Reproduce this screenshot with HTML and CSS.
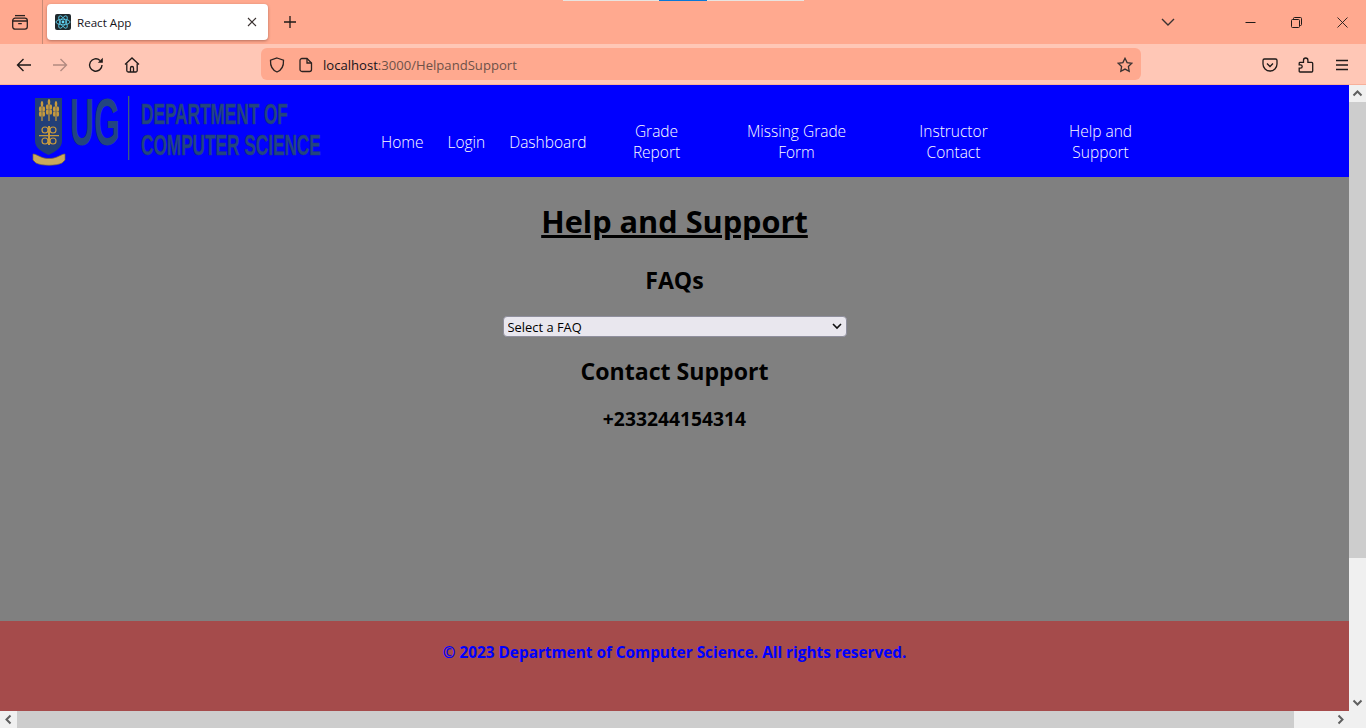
FILE: index.html
```html
<!DOCTYPE html>
<html lang="en">
<head>
<meta charset="utf-8">
<title>React App</title>
<link rel="stylesheet" href="styles.css">
</head>
<body>
<div class="share-strip"><span class="strip-light"></span><span class="strip-blue"></span><span class="strip-light strip-end"></span></div>
<header class="tabbar">
  <button class="tb-btn view-btn" aria-label="List all tabs">
    <svg width="18" height="18" viewBox="0 0 18 18" fill="none" stroke="#2b2220" stroke-width="1.3"><path d="M4 2.600h10"/><rect x="1.700" y="5.200" width="14.600" height="11" rx="2.400"/><path d="M1.700 8h14.600M7.200 10.600h3.600"/></svg>
  </button>
  <div class="tab">
    <svg class="favicon" width="16" height="16" viewBox="0 0 16 16" fill="none"><rect width="16" height="16" rx="2" fill="#20292d"/><g stroke="#61dafb" stroke-width=".8"><ellipse cx="8" cy="8" rx="7" ry="2.800"/><ellipse cx="8" cy="8" rx="7" ry="2.800" transform="rotate(60 8 8)"/><ellipse cx="8" cy="8" rx="7" ry="2.800" transform="rotate(120 8 8)"/></g><circle cx="8" cy="8" r="1.400" fill="#61dafb"/></svg>
    <span class="tab-title">React App</span>
    <svg class="tab-close" width="10" height="10" viewBox="0 0 10 10" stroke="#3a3231" stroke-width="1.100"><path d="M1 1l8 8M9 1l-8 8"/></svg>
  </div>
  <button class="tb-btn new-tab" aria-label="New tab">
    <svg width="14" height="14" viewBox="0 0 14 14" stroke="#1f1a19" stroke-width="1.300"><path d="M7 1v12M1 7h12"/></svg>
  </button>
  <div class="tabbar-spacer"></div>
  <svg class="tabs-chevron" width="14" height="8" viewBox="0 0 14 8" fill="none" stroke="#3a3231" stroke-width="1.400"><path d="M1 1l6 6 6-6"/></svg>
  <div class="win-controls">
    <svg width="11" height="11" viewBox="0 0 11 11" stroke="#1f1a19" stroke-width="1"><path d="M0.500 5.500h10"/></svg>
    <svg width="11" height="11" viewBox="0 0 11 11" fill="none" stroke="#1f1a19" stroke-width="1"><rect x=".5" y="2.500" width="8" height="8" rx="1"/><path d="M2.500 2.500v-1a1 1 0 0 1 1-1h6a1 1 0 0 1 1 1v6a1 1 0 0 1-1 1h-1"/></svg>
    <svg width="11" height="11" viewBox="0 0 11 11" stroke="#1f1a19" stroke-width=".9"><path d="M.5.5l10 10M10.500.5l-10 10"/></svg>
  </div>
</header>
<div class="toolbar">
  <div class="nav-buttons">
    <svg width="16" height="16" viewBox="0 0 16 16" fill="none" stroke="#1f1a19" stroke-width="1.400"><path d="M15 8H1.500M7.500 2L1.500 8l6 6"/></svg>
    <svg width="16" height="16" viewBox="0 0 16 16" fill="none" stroke="#b28a80" stroke-width="1.400"><path d="M1 8h13.500M8.500 2l6 6-6 6"/></svg>
    <svg width="16" height="16" viewBox="0 0 16 16" fill="none" stroke="#1f1a19" stroke-width="1.400"><path d="M14 8a6.200 6.200 0 1 1-2-4.600"/><path d="M14.800 0.800v5h-5z" fill="#1f1a19" stroke="none"/></svg>
    <svg width="16" height="16" viewBox="0 0 16 16" fill="none" stroke="#1f1a19" stroke-width="1.300"><path d="M1 7.500L8 1l7 6.500"/><path d="M2.800 6.500v7a1.500 1.500 0 0 0 1.500 1.500h7.400a1.500 1.500 0 0 0 1.500-1.500v-7"/><path d="M6.500 15v-4a1.500 1.500 0 0 1 3 0v4"/></svg>
  </div>
  <div class="urlbar">
    <svg class="shield" width="16" height="16" viewBox="0 0 16 16" fill="none" stroke="#2b2220" stroke-width="1.300"><path d="M8 1l6.500 2.200c.300 5.800-1.800 9.800-6.500 11.800C3.300 13 1.200 9 1.500 3.200z"/></svg>
    <svg class="page-icon" width="14" height="16" viewBox="0 0 14 16" fill="none" stroke="#2b2220" stroke-width="1.300"><path d="M3 1.500h5l4.500 4.500v6.500a2 2 0 0 1-2 2H3a2 2 0 0 1-2-2v-9a2 2 0 0 1 2-2z"/><path d="M8 1.500V6h4.500"/></svg>
    <span class="url"><span class="url-host">localhost</span>:3000/HelpandSupport</span>
    <svg class="star" width="16" height="16" viewBox="0 0 16 16" fill="none" stroke="#3a3231" stroke-width="1.300"><path d="M8 1.300l2.100 4.300 4.700.7-3.400 3.300.8 4.700L8 12.100l-4.200 2.200.8-4.700L1.200 6.300l4.700-.7z"/></svg>
  </div>
  <div class="tool-right">
    <svg width="16" height="16" viewBox="0 0 16 16" fill="none" stroke="#1f1a19" stroke-width="1.300"><path d="M2.500 2h11A1.500 1.500 0 0 1 15 3.500V7a7 7 0 0 1-14 0V3.500A1.500 1.500 0 0 1 2.500 2z"/><path d="M5 6.500L8 9.500l3-3"/></svg>
    <svg width="16" height="16" viewBox="0 0 16 16" fill="none" stroke="#1f1a19" stroke-width="1.300"><path d="M2 15a.8.8 0 0 1-.8-.8v-3h1.300a1.700 1.700 0 0 0 0-3.400H1.200V6.200a.8.8 0 0 1 .8-.8h3.500V3.200a2.200 2.200 0 0 1 4.400 0v2.200h3.800a1 1 0 0 1 1 1V14a1 1 0 0 1-1 1z"/></svg>
    <svg class="menu-icon" width="14" height="12" viewBox="0 0 14 12" stroke="#1f1a19" stroke-width="1.300"><path d="M1 1.500h12M1 6h12M1 10.500h12"/></svg>
  </div>
</div>
<div class="viewport">
  <div class="page-area">
    <div class="page">
      <nav class="site-nav">
        <svg class="logo" width="290" height="72" viewBox="32 96 290 72">
          <path d="M35 99h27v43c0 7-7 11-13.500 14C42 153 35 149 35 142z" fill="#223f78"/>
          <g fill="none" stroke="#c79a3e" stroke-width="1.200"><path d="M42 105v17M49 103v19M56 105v17"/></g>
          <g fill="#c79a3e">
            <ellipse cx="42" cy="105" rx="1.300" ry="3"/><ellipse cx="49" cy="103" rx="1.300" ry="3"/><ellipse cx="56" cy="105" rx="1.300" ry="3"/>
            <ellipse cx="40.200" cy="110" rx="1.300" ry="2.800"/><ellipse cx="43.800" cy="110" rx="1.300" ry="2.800"/>
            <ellipse cx="47.200" cy="108" rx="1.300" ry="2.800"/><ellipse cx="50.800" cy="108" rx="1.300" ry="2.800"/>
            <ellipse cx="54.200" cy="110" rx="1.300" ry="2.800"/><ellipse cx="57.800" cy="110" rx="1.300" ry="2.800"/>
            <ellipse cx="40.200" cy="115" rx="1.300" ry="2.800"/><ellipse cx="43.800" cy="115" rx="1.300" ry="2.800"/>
            <ellipse cx="47.200" cy="113" rx="1.300" ry="2.800"/><ellipse cx="50.800" cy="113" rx="1.300" ry="2.800"/>
            <ellipse cx="54.200" cy="115" rx="1.300" ry="2.800"/><ellipse cx="57.800" cy="115" rx="1.300" ry="2.800"/>
            <path d="M39 136h20v1.200H39zM48 127h2v19h-2z"/>
          </g>
          <g fill="none" stroke="#c79a3e" stroke-width="1.200"><circle cx="45" cy="131" r="3"/><circle cx="53" cy="131" r="3"/><circle cx="45" cy="142" r="3"/><circle cx="53" cy="142" r="3"/></g>
          <path d="M33 155c3 0 5 2 8 3 5 2 11 2 16 0 3-1 5-3 8-3v6l-3 3c-6 3-20 3-26 0l-3-3z" fill="#c9a95c" stroke="#7a6a3a" stroke-width=".7"/>
          <text class="logo-ug" transform="translate(70 146) scale(.505 1)">UG</text>
          <rect x="128" y="97" width="1.300" height="64" fill="#3d5f7e"/>
          <text class="logo-dept" transform="translate(141 125) scale(.574 1)">DEPARTMENT OF</text>
          <text class="logo-dept" transform="translate(141 156) scale(.574 1)">COMPUTER SCIENCE</text>
        </svg>
        <ul class="nav-list">
          <li class="nav-item"><a>Home</a></li>
          <li class="nav-item"><a>Login</a></li>
          <li class="nav-item"><a>Dashboard</a></li>
          <li class="nav-item w-grade"><a>Grade Report</a></li>
          <li class="nav-item w-missing"><a>Missing Grade Form</a></li>
          <li class="nav-item w-instructor"><a>Instructor Contact</a></li>
          <li class="nav-item w-help"><a>Help and Support</a></li>
        </ul>
      </nav>
      <main class="content">
        <h1 class="title">Help and Support</h1>
        <h2 class="section">FAQs</h2>
        <div class="select-wrap">
          <select class="faq"><option>Select a FAQ</option></select>
          <svg class="select-arrow" width="10" height="7" viewBox="0 0 10 7" fill="none" stroke="#111" stroke-width="1.600"><path d="M1 1l4 4 4-4"/></svg>
        </div>
        <h2 class="section contact">Contact Support</h2>
        <h3 class="phone">+233244154314</h3>
      </main>
      <footer class="footer">© 2023 Department of Computer Science. All rights reserved.</footer>
    </div>
    <div class="vscroll">
      <svg class="sb-arrow" width="17" height="17" viewBox="0 0 17 17" fill="none" stroke="#5f5f5f" stroke-width="2"><path d="M4.500 10.500l4-4 4 4"/></svg>
      <div class="v-thumb"></div>
      <div class="sb-fill"></div>
      <svg class="sb-arrow" width="17" height="17" viewBox="0 0 17 17" fill="none" stroke="#5f5f5f" stroke-width="2"><path d="M4.500 6.500l4 4 4-4"/></svg>
    </div>
  </div>
  <div class="hscroll">
    <svg class="sb-arrow" width="17" height="17" viewBox="0 0 17 17" fill="none" stroke="#5f5f5f" stroke-width="2"><path d="M10.500 4.500l-4 4 4 4"/></svg>
    <div class="h-thumb"></div>
    <div class="sb-fill"></div>
    <svg class="sb-arrow" width="17" height="17" viewBox="0 0 17 17" fill="none" stroke="#5f5f5f" stroke-width="2"><path d="M6.500 4.500l4 4-4 4"/></svg>
    <div class="sb-corner"></div>
  </div>
</div>
</body>
</html>
```
FILE: styles.css
```css
* { box-sizing: border-box; }
html, body { margin: 0; height: 728px; overflow: hidden; }
body {
  display: flex;
  flex-direction: column;
  font-family: "Open Sans", "Noto Sans", sans-serif;
  position: relative;
  background: #808080;
}
svg { display: block; flex: none; }
.share-strip { position: absolute; top: 0; left: 563px; width: 241px; height: 1px; display: flex; }
.strip-light { width: 96px; background: #e8e4e0; }
.strip-blue { width: 48px; background: #0a78d6; }
.strip-end { width: 97px; }
.tabbar {
  height: 44px;
  background: #ffa98f;
  display: flex;
  align-items: center;
  flex: none;
}
.tb-btn { background: none; border: 0; padding: 0; display: flex; align-items: center; justify-content: center; }
.view-btn { width: 43px; height: 44px; border-right: 1px solid #c98a75; padding-right: 3px; }
.tab {
  margin-left: 4px;
  width: 221px;
  height: 36px;
  background: #fff;
  border-radius: 4px;
  box-shadow: 0 1px 3px rgba(90, 40, 30, .45);
  display: flex;
  align-items: center;
  padding: 0 11px 0 8px;
}
.tab-title { font-size: 11.6px; margin-left: 6px; flex: 1; color: #15141a; }
.new-tab { width: 44px; height: 44px; }
.tabbar-spacer { flex: 1; }
.tabs-chevron { margin-right: 70px; }
.win-controls { display: flex; gap: 35px; margin-right: 18px; align-items: center; }
.toolbar {
  height: 41px;
  background: #ffc7b6;
  display: flex;
  align-items: center;
  flex: none;
  border-bottom: 1px solid #f8b09a;
}
.nav-buttons { display: flex; gap: 20px; padding: 2px 0 0 16px; width: 261px; }
.urlbar {
  width: 880px;
  height: 32px;
  background: #ffa98f;
  border-radius: 6px;
  display: flex;
  align-items: center;
  padding: 1px 8px 0;
}
.shield { margin-right: 14px; }
.page-icon { margin-right: 10px; }
.url { font-size: 13.1px; flex: 1; color: #6e5148; }
.url-host { color: #15141a; }
.tool-right { display: flex; gap: 20px; padding: 1px 0 0 121px; align-items: center; }
.menu-icon { margin-left: 1px; }
.viewport { flex: 1; display: flex; flex-direction: column; min-height: 0; }
.page-area { flex: 1; display: flex; min-height: 0; }
.page { flex: 1; display: flex; flex-direction: column; min-width: 0; }
.site-nav {
  height: 92px;
  background: #00f;
  display: flex;
  align-items: center;
  padding-left: 32px;
}
.logo { overflow: visible; }
.logo-ug { font: bold 66px "Liberation Sans", sans-serif; fill: #23457f; }
.logo-dept { font: bold 30px "Liberation Sans", sans-serif; fill: #23457f; stroke: #1c3c78; stroke-width: .4; }
.nav-list {
  list-style: none;
  margin: 22px 0 0 59px;
  padding: 0;
  display: flex;
  gap: 24px;
  align-items: center;
}
.nav-item {
  color: #fff;
  font-size: 15.5px;
  font-weight: 300;
  line-height: 21px;
  text-align: center;
}
.w-grade { width: 92px; padding: 0 20px; }
.w-missing { width: 140px; padding: 0 18px; }
.w-instructor { width: 126px; padding: 0 22px; }
.w-help { width: 120px; padding: 0 22px; }
.content {
  flex: 1;
  display: flex;
  flex-direction: column;
  align-items: center;
  color: #000;
}
.title {
  font-size: 30.7px;
  font-weight: 700;
  text-decoration: underline;
  margin: 23px 0 0;
  line-height: 42px;
}
.section { font-size: 23.1px; font-weight: 700; margin: 22px 0 0; line-height: 32px; }
.select-wrap { position: relative; margin: 20px 0 0 0; }
.faq {
  appearance: none;
  display: block;
  width: 344px;
  height: 21px;
  background: #e9e7ee;
  border: 1px solid #8f8f9d;
  border-radius: 4px;
  font: 12.9px "Open Sans", sans-serif;
  color: #000;
  padding: 0 4px;
}
.select-arrow { position: absolute; right: 5px; top: 7px; }
.contact { margin-top: 18px; }
.phone { font-size: 19.3px; font-weight: 700; margin: 19px 0 0; line-height: 26px; }
.footer {
  height: 90px;
  background: #a54b4b;
  color: #00f;
  font-weight: 700;
  font-size: 15.35px;
  text-align: center;
  padding-top: 21px;
  line-height: 20px;
}
.vscroll { width: 17px; background: #f0f0f0; display: flex; flex-direction: column; }
.v-thumb { height: 456px; background: #cdcdcd; }
.sb-fill { flex: 1; }
.hscroll { height: 17px; background: #f0f0f0; display: flex; flex: none; }
.h-thumb { width: 1277px; background: #cdcdcd; }
.sb-corner { width: 17px; }
```
